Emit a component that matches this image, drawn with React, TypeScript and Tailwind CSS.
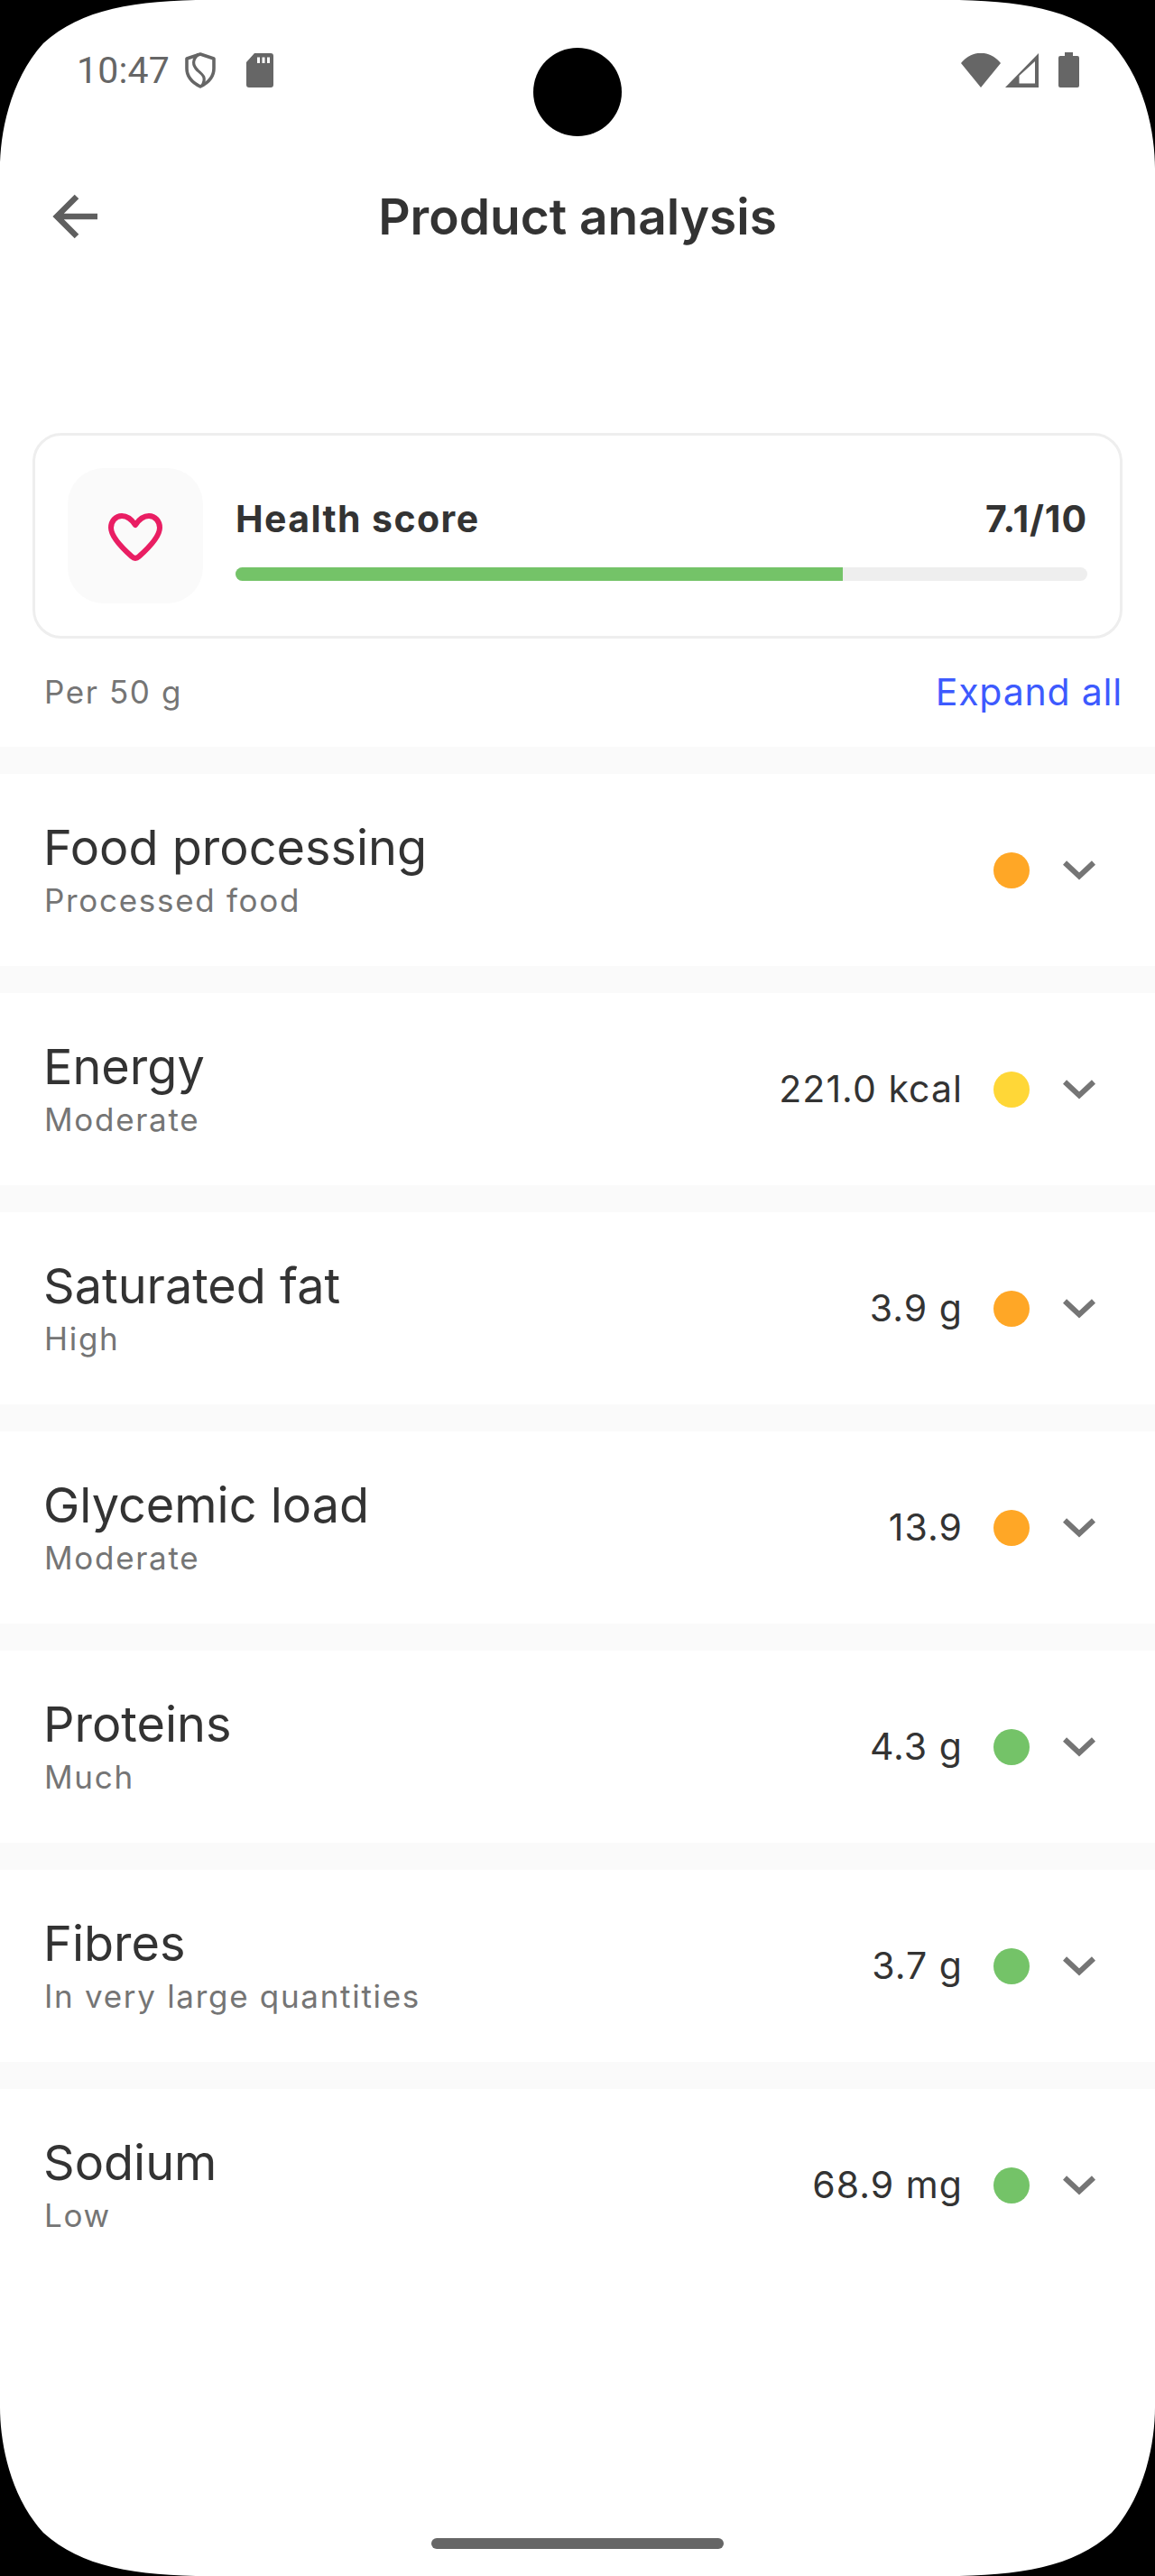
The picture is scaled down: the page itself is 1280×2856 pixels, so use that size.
const rows = [
  { name: "Food processing", note: "Processed food", value: "", dot: "bg-[#ffa726]" },
  { name: "Energy", note: "Moderate", value: "221.0 kcal", dot: "bg-[#ffd737]" },
  { name: "Saturated fat", note: "High", value: "3.9 g", dot: "bg-[#ffa726]" },
  { name: "Glycemic load", note: "Moderate", value: "13.9", dot: "bg-[#ffa726]" },
  { name: "Proteins", note: "Much", value: "4.3 g", dot: "bg-[#74c368]" },
  { name: "Fibres", note: "In very large quantities", value: "3.7 g", dot: "bg-[#74c368]" },
  { name: "Sodium", note: "Low", value: "68.9 mg", dot: "bg-[#74c368]" },
];

// black screen corner, same curve flipped for all four
function Corner({ className }: { className: string }) {
  return (
    <svg className={`absolute h-[187px] w-[232px] ${className}`} viewBox="0 0 232 187" fill="#000000">
      <path d="M0 0 H232 C150 0 90 10 48 48 C10 90 0 150 0 187 Z" />
    </svg>
  );
}

function StatusBar() {
  return (
    <div className="flex h-[187px] items-start justify-between pl-[85px] pr-[84px] pt-[54px] text-[#666666]">
      <div className="flex items-center">
        <span className="font-['Roboto',sans-serif] text-[41px] leading-[48px] tracking-[0.2px]">10:47</span>
        <svg className="ml-[17px] h-[40px] w-[34px]" viewBox="0 0 34 40" fill="none">
          <path d="M17 2 L32 7 V18 C32 28 25 34 17 38 C9 34 2 28 2 18 V7 Z" stroke="#666666" strokeWidth="3.6" strokeLinejoin="round" />
          <path d="M15 2 C8 8 8 14 14 20 C20 25 24 28 19 37" stroke="#666666" strokeWidth="3.2" />
        </svg>
        <svg className="ml-[34px] h-[38px] w-[30px]" viewBox="0 0 30 38" fill="#666666">
          <path fillRule="evenodd" d="M9 0 H27 Q30 0 30 3 V35 Q30 38 27 38 H3 Q0 38 0 35 V10 Z M12 4.5 V11 H15 V4.5 Z M17.5 4.5 V11 H20.5 V4.5 Z M23 4.5 V11 H26 V4.5 Z" />
        </svg>
      </div>
      <div className="flex items-center pt-[4px]">
        <svg className="h-[38px] w-[44px]" viewBox="0 0 44 38" fill="#666666">
          <path d="M0 11 C12 -4 32 -4 44 11 L22 38 Z" />
        </svg>
        <svg className="ml-[5px] h-[38px] w-[37px]" viewBox="0 0 37 38" fill="#666666">
          <path fillRule="evenodd" d="M37 0 V38 H0 Z M33 9 L15.5 25 V33.5 H33 Z" />
        </svg>
        <svg className="ml-[22px] h-[39px] w-[23px]" viewBox="0 0 23 39" fill="#666666">
          <path d="M7 0 H16 V4 H21 Q23 4 23 6 V37 Q23 39 21 39 H2 Q0 39 0 37 V6 Q0 4 2 4 H7 Z" />
        </svg>
      </div>
    </div>
  );
}

function Row({ name, note, value, dot }: { name: string; note: string; value: string; dot: string }) {
  return (
    <div className="box-content flex h-[213px] items-center border-t-[30px] border-[#fafafa] pl-[49px] pr-[66px]">
      <div className="flex-1 pb-[1px]">
        <p className="-ml-[1px] text-[54px] leading-[62px] text-[#333333]">{name}</p>
        <p className="mt-[6px] text-[35px] leading-[42px] tracking-[1.7px] text-[#757575]">{note}</p>
      </div>
      {value && <span className="text-[41px] tracking-[1.05px] text-[#333333]">{value}</span>}
      <span className={`ml-[34px] h-[40px] w-[40px] rounded-full ${dot}`} />
      <svg className="ml-[37px] mt-[1px] h-[22px] w-[36px]" viewBox="0 0 36 22" fill="none">
        <path d="M2 2.5 L18 17.5 L34 2.5" stroke="#757575" strokeWidth="6" />
      </svg>
    </div>
  );
}

export default function App() {
  return (
    <div className="relative flex h-[2856px] w-[1280px] flex-col overflow-hidden bg-white font-['Inter',sans-serif]">
      <Corner className="left-0 top-0" />
      <Corner className="right-0 top-0 -scale-x-100" />
      <Corner className="bottom-0 left-0 -scale-y-100" />
      <Corner className="bottom-0 right-0 -scale-100" />
      <div className="absolute left-[591px] top-[53px] h-[98px] w-[98px] rounded-full bg-black" />

      <StatusBar />

      <div className="relative flex h-[106px] items-center justify-center">
        <svg className="absolute left-[58px] top-[28px] h-[50px] w-[52px]" viewBox="0 0 52 50" fill="none">
          <path d="M50 25 H5 M27 3 L5 25 L27 47" stroke="#5f5f5f" strokeWidth="6.5" />
        </svg>
        <h1 className="text-[55px] font-semibold leading-none text-[#333333]">Product analysis</h1>
      </div>

      <div className="mx-[36px] mt-[187px] flex h-[228px] items-center rounded-[32px] border-[3px] border-[#eeeeee] px-[36px]">
        <div className="flex h-[150px] w-[150px] shrink-0 items-center justify-center rounded-[40px] bg-[#fafafa]">
          <svg className="mt-[3px] h-[53px] w-[60px]" viewBox="0 0 60 53" fill="none">
            <path d="M30 13 C26 7 21 3 15 3 C8 3 3 9 3 16 C3 26 17 40 26 48 C28.5 50.2 31.5 50.2 34 48 C43 40 57 26 57 16 C57 9 52 3 45 3 C39 3 34 7 30 13 Z" stroke="#e91e63" strokeWidth="6" strokeLinejoin="round" />
          </svg>
        </div>
        <div className="ml-[36px] flex-1 pt-[6px]">
          <div className="flex items-center justify-between">
            <span className="text-[41px] font-bold leading-[50px] tracking-[1.4px] text-[#333333]">Health score</span>
            <span className="text-[41px] font-bold leading-[50px] tracking-[0.9px] text-[#333333]">7.1/10</span>
          </div>
          <div className="mt-[29px] h-[15px] overflow-hidden rounded-full bg-[#eeeeee]">
            <div className="h-full w-[71.3%] bg-[#74c368]" />
          </div>
        </div>
      </div>

      <div className="flex h-[120px] items-center justify-between pl-[49px] pr-[36px]">
        <span className="-mt-[2px] text-[35px] tracking-[1.6px] text-[#757575]">Per 50 g</span>
        <span className="text-[41px] tracking-[0.8px] text-[#3d5afe]">Expand all</span>
      </div>

      {rows.map((r) => (
        <Row key={r.name} {...r} />
      ))}

      <div className="absolute bottom-[30px] left-[478px] h-[12px] w-[324px] rounded-full bg-[#666666]" />
    </div>
  );
}
